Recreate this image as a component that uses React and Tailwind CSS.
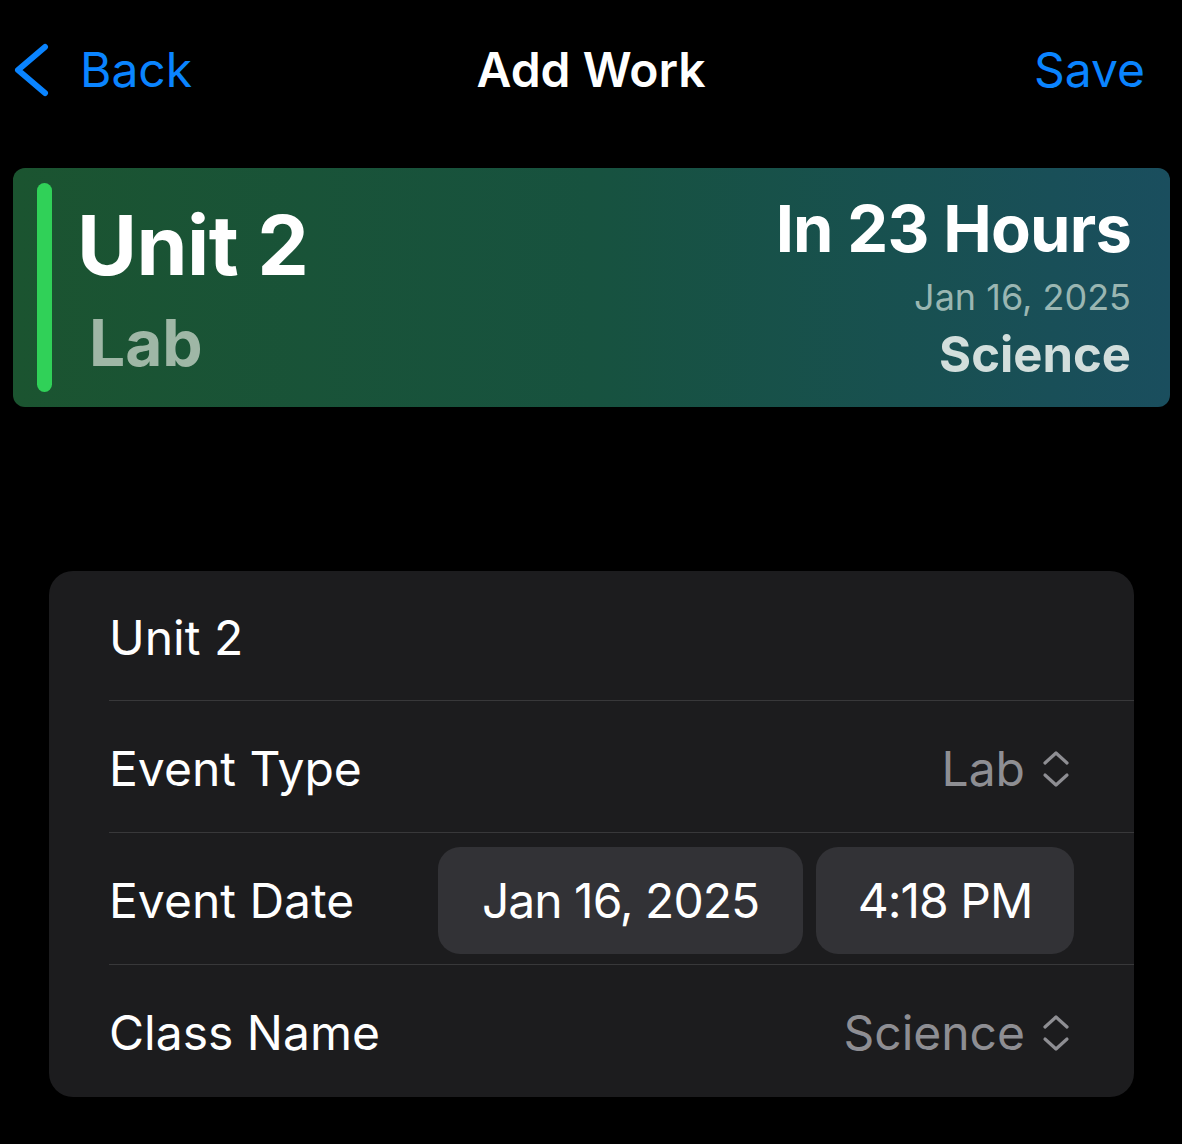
import React from 'react';

const font = { fontFamily: 'Inter, "Noto Sans", sans-serif' };

function BackChevron() {
  return (
    <svg width="36" height="56" viewBox="0 0 36 56" className="shrink-0">
      <polyline points="31,5 4,28 31,51" fill="none" stroke="#0a84ff" strokeWidth="6" strokeLinecap="round" strokeLinejoin="round" />
    </svg>
  );
}

function UpDown() {
  return (
    <svg width="30" height="40" viewBox="0 0 30 40" className="shrink-0">
      <polyline points="4,14 15,4 26,14" fill="none" stroke="#8e8e93" strokeWidth="3.2" strokeLinecap="round" strokeLinejoin="round" />
      <polyline points="4,26 15,36 26,26" fill="none" stroke="#8e8e93" strokeWidth="3.2" strokeLinecap="round" strokeLinejoin="round" />
    </svg>
  );
}

function Row({ children, last }) {
  return (
    <div className="pl-[60px]">
      <div className={`h-[132px] flex items-center pr-[60px] pt-[4px] ${last ? '' : 'border-b border-[#38383a]'}`}>
        {children}
      </div>
    </div>
  );
}

export default function App() {
  return (
    <div className="w-[1182px] h-[1144px] bg-black text-white overflow-hidden" style={font}>
      <div className="h-[140px] flex items-center justify-between pl-[14px] pr-[37px] relative">
        <div className="flex items-center gap-[32px] text-[#0a84ff] text-[48px] leading-none">
          <BackChevron />
          <span className="-ml-[2px]">Back</span>
        </div>
        <div className="absolute left-0 right-0 top-0 h-[140px] flex items-center justify-center pointer-events-none">
          <span className="text-[48px] font-semibold leading-none">Add Work</span>
        </div>
        <span className="text-[#0a84ff] text-[48px] leading-none">Save</span>
      </div>

      <div className="mt-[28px] ml-[13px] mr-[12px] h-[239px] rounded-[12px] bg-gradient-to-r from-[#1b5430] via-[#17523f] to-[#1a4e5e] flex items-stretch pl-[24px] pr-[39px] py-[15px]">
        <div className="w-[15px] rounded-full bg-[#30d158]" />
        <div className="flex flex-col ml-[25px] pt-[22px]">
          <span className="text-[82px] font-bold leading-none tracking-[-0.5px]">Unit 2</span>
          <span className="text-[64px] font-bold leading-none text-[#9fb7a6] ml-[12px] mt-[24px]">Lab</span>
        </div>
        <div className="flex-1 flex flex-col items-end pt-[13px]">
          <span className="text-[65px] font-bold leading-none tracking-[-0.8px]">In 23 Hours</span>
          <span className="text-[36px] leading-none text-[#9ab6b2] mt-[18px]">Jan 16, 2025</span>
          <span className="text-[49px] font-bold leading-none text-[#d2dedc] mt-[15px]">Science</span>
        </div>
      </div>

      <div className="mt-[164px] ml-[49px] mr-[48px] rounded-[24px] bg-[#1c1c1e]">
        <div className="h-[130px] flex items-center border-b border-[#38383a] ml-[60px] pt-[4px]">
          <span className="text-[48px] leading-none">Unit 2</span>
        </div>
        <Row>
          <span className="text-[48px] leading-none">Event Type</span>
          <div className="ml-auto flex items-center gap-[16px] mr-[3px]">
            <span className="text-[48px] leading-none text-[#8e8e93]">Lab</span>
            <UpDown />
          </div>
        </Row>
        <Row>
          <span className="text-[48px] leading-none">Event Date</span>
          <div className="ml-auto flex items-center gap-[13px]">
            <div className="h-[107px] w-[365px] rounded-[22px] bg-[#323236] flex items-center justify-center">
              <span className="text-[48px] leading-none tracking-[-1px]">Jan 16, 2025</span>
            </div>
            <div className="h-[107px] w-[258px] rounded-[22px] bg-[#323236] flex items-center justify-center">
              <span className="text-[48px] leading-none tracking-[-1px]">4:18 PM</span>
            </div>
          </div>
        </Row>
        <Row last>
          <span className="text-[48px] leading-none">Class Name</span>
          <div className="ml-auto flex items-center gap-[16px] mr-[3px]">
            <span className="text-[48px] leading-none text-[#8e8e93]">Science</span>
            <UpDown />
          </div>
        </Row>
      </div>
    </div>
  );
}
